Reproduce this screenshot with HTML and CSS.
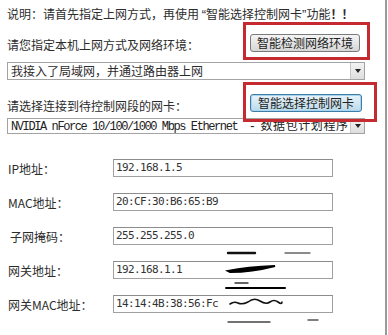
FILE: index.html
```html
<!DOCTYPE html>
<html>
<head>
<meta charset="utf-8">
<link rel="stylesheet" href="styles.css">
</head>
<body>
<div class="page">
  <div class="note">说明：请首先指定上网方式，再使用 <span class="q">“</span>智能选择控制网卡<span class="q">”</span>功能<b class="bang">！！</b></div>

  <div class="row row-a">
    <span class="label">请您指定本机上网方式及网络环境：</span>
    <span class="btn-wrap wrap-a">
      <button class="btn">智能检测网络环境</button>
      <span class="mark mark-a"></span>
    </span>
  </div>

  <div class="select sel-a">
    <span class="sel-text">我接入了局域网，并通过路由器上网</span>
    <span class="sel-arrow"><span class="tri"></span></span>
  </div>

  <div class="row row-b">
    <span class="label label-b">请选择连接到待控制网段的网卡：</span>
    <span class="btn-wrap wrap-b">
      <button class="btn btn-focus">智能选择控制网卡</button>
      <span class="mark mark-b"></span>
    </span>
  </div>

  <div class="select sel-b">
    <span class="sel-text mono">NVIDIA nForce 10/100/1000 Mbps Ethernet  - <span class="cjk">数据包计划程序</span></span>
    <span class="sel-arrow"><span class="tri"></span></span>
  </div>

  <div class="fields">
    <div class="field"><span class="flabel">IP地址：</span><span class="input">192.168.1.5</span></div>
    <div class="field"><span class="flabel">MAC地址：</span><span class="input">20:CF:30:B6:65:B9</span></div>
    <div class="field"><span class="flabel flabel-sub">子网掩码：</span><span class="input">255.255.255.0</span></div>
    <div class="field"><span class="flabel">网关地址：</span><span class="input">192.168.1.1</span></div>
    <div class="field"><span class="flabel">网关MAC地址：</span><span class="input">14:14:4B:38:56:Fc</span></div>
  </div>

  <svg class="scribble" width="115" height="85" viewBox="0 0 115 85">
    <path d="M6 8 L33 8" stroke="#111" stroke-width="2.4" stroke-linecap="round" fill="none"/>
    <path d="M63 8 L88 8" stroke="#666" stroke-width="1.4" stroke-linecap="round" fill="none"/>
    <path d="M6 26 Q25 22 53 21 Q30 27 8 27 Z" stroke="#000" stroke-width="2" fill="#000"/>
    <path d="M13 38 L26 38" stroke="#333" stroke-width="1.4" stroke-linecap="round" fill="none"/>
    <path d="M4 43 L63 43" stroke="#000" stroke-width="2" stroke-linecap="round" fill="none"/>
    <path d="M8 59 Q12 56 16 58 T26 57 Q32 52 38 56 T48 57 Q52 54 56 57 T60 57" stroke="#111" stroke-width="1.6" stroke-linecap="round" fill="none"/>
    <path d="M6 77 L48 77" stroke="#444" stroke-width="1.4" stroke-linecap="round" fill="none"/>
    <path d="M86 75 L96 75" stroke="#555" stroke-width="1.4" stroke-linecap="round" fill="none"/>
  </svg>
</div>
</body>
</html>
```

FILE: styles.css
```css
* { box-sizing: border-box; }
html, body { margin: 0; padding: 0; background: #fff; }
body {
  font-family: "Noto Sans CJK SC", "Noto Sans", sans-serif;
  font-size: 12px;
  color: #2c2c2c;
}
.page {
  position: relative;
  width: 387px;
  height: 335px;
  padding: 6px 20px 0 7px;
  border-right: 2px solid #9a9a9a;
  overflow: hidden;
}
.note {
  height: 16px;
  line-height: 16px;
  white-space: nowrap;
}
.q {
  font-family: "Liberation Sans", sans-serif;
  font-size: 13px;
}
.bang { font-weight: 700; letter-spacing: -1px; }
.row {
  display: flex;
  align-items: center;
  justify-content: space-between;
  height: 18px;
}
.row-a { margin-top: 12px; }
.row-b { margin-top: 14px; }
.label { line-height: 16px; padding-top: 3px; white-space: nowrap; }
.label-b { padding-top: 6px; }
.btn-wrap { position: relative; display: flex; }
.wrap-a { margin-right: 5px; }
.wrap-b { margin-right: 3px; }
.btn {
  font-family: "Noto Sans CJK SC", sans-serif;
  font-size: 12px;
  color: #222;
  height: 18px;
  line-height: 16px;
  padding: 0;
  width: 110px;
  border: 1px solid #7a7a7a;
  border-radius: 3px;
  background: linear-gradient(#f4f4f4, #e6e6e6 50%, #d6d6d6);
}
.btn-focus {
  width: 112px;
  border-color: #3d7ba8;
  background: linear-gradient(#e8f3fa, #d2e8f3 50%, #b9d9ea);
  box-shadow: inset 0 0 0 1px #a8d4ec;
}
.mark {
  position: absolute;
  border: 3px solid #c42a30;
  pointer-events: none;
  z-index: 2;
}
.mark-a { left: -7px; right: -10px; top: -12px; bottom: -8px; }
.mark-b { left: -7px; right: -15px; top: -12px; bottom: -10px; }

.select {
  position: relative;
  display: flex;
  align-items: center;
  width: 358px;
  border: 1px solid #a3a3a3;
  background: #fff;
  overflow: hidden;
}
.sel-a { margin-top: 10px; height: 18px; }
.sel-b { margin-top: 6px; height: 16px; }
.sel-text {
  flex: 1;
  min-width: 0;
  padding-left: 3px;
  white-space: pre;
  overflow: hidden;
  line-height: 16px;
}
.mono {
  font-family: "Liberation Mono", monospace;
  font-size: 12px;
  letter-spacing: -1.4px;
  color: #222;
  padding-left: 3px;
  line-height: 14px;
}
.cjk {
  font-family: "Noto Sans CJK SC", sans-serif;
  font-size: 12px;
  letter-spacing: 0.6px;
}
.sel-arrow {
  align-self: stretch;
  flex: none;
  width: 14px;
  border-left: 1px solid #c8c8c8;
  background: linear-gradient(#f2f2f2, #dedede);
  display: flex;
  align-items: center;
  justify-content: center;
}
.tri {
  width: 0;
  height: 0;
  border-left: 3.5px solid transparent;
  border-right: 3.5px solid transparent;
  border-top: 4px solid #222;
}

.fields {
  margin-top: 25px;
  display: flex;
  flex-direction: column;
  gap: 16px;
}
.field {
  display: flex;
  align-items: center;
  height: 18px;
}
.flabel {
  width: 106px;
  padding-left: 1px;
  white-space: nowrap;
}
.flabel-sub { padding-left: 3px; }
.input {
  width: 220px;
  height: 18px;
  border: 1px solid #a0a0a0;
  border-top-color: #8c8c8c;
  padding-left: 2px;
  font-family: "DejaVu Sans Mono", monospace;
  font-size: 11px;
  letter-spacing: -0.62px;
  line-height: 16px;
  color: #333;
  white-space: nowrap;
  overflow: hidden;
}
.scribble {
  position: absolute;
  left: 222px;
  top: 245px;
  pointer-events: none;
}
```
